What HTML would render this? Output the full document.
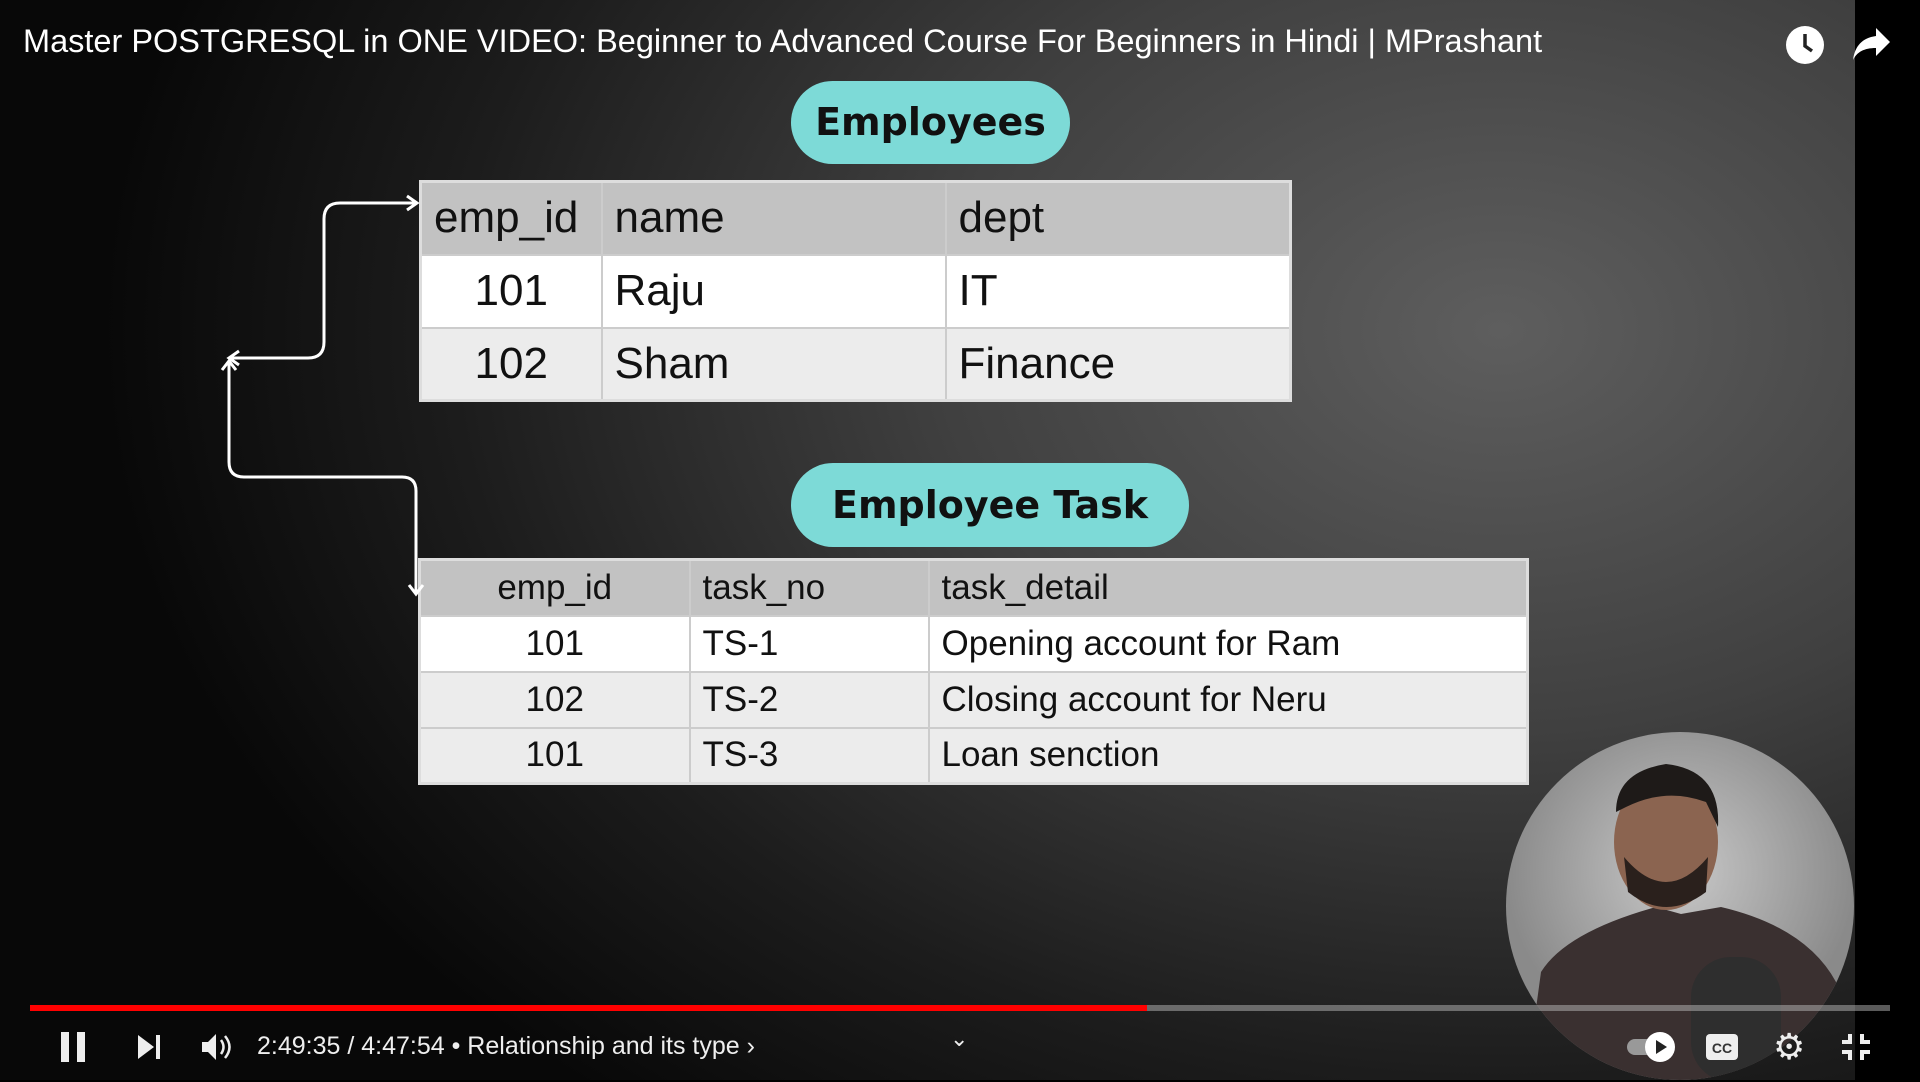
<!DOCTYPE html>
<html><head><meta charset="utf-8"><style>
*{margin:0;padding:0;box-sizing:border-box}
body{width:1920px;height:1080px;overflow:hidden;background:#000;font-family:"Liberation Sans",sans-serif;position:relative}
#vid{position:absolute;left:0;top:0;width:1855px;height:1080px;background:radial-gradient(ellipse 1400px 1000px at 1500px 330px,#5e5e5e 0%,#404040 40%,#1c1c1c 75%,#080808 100%)}
.title{position:absolute;left:23px;top:23px;color:#fff;font-size:32.5px;white-space:nowrap}
.pill{position:absolute;background:#7ddad7;border-radius:42px;color:#111;font-weight:bold;text-align:center;font-family:"DejaVu Sans",sans-serif}
table{position:absolute;border-collapse:collapse;color:#111}
td{border:2px solid #ccc;padding:0 0 0 12px}
.t1 td{font-size:44px;height:73px}
.t2 td{font-size:35px;height:56px}
.hd td{background:#c2c2c2}
.w td{background:#fff}
.g td{background:#ececec}
.c{text-align:center;padding:0}
.bar{position:absolute;top:1005px;height:6px}
.ctl{position:absolute;color:#eee}
</style></head><body>
<div id="vid"></div>
<div class="title">Master POSTGRESQL in ONE VIDEO: Beginner to Advanced Course For Beginners in Hindi | MPrashant</div>
<svg style="position:absolute;left:1785px;top:25px" width="40" height="40" viewBox="0 0 40 40"><circle cx="20" cy="20" r="19" fill="#fff"/><path d="M20 9v12l7 5" stroke="#222" stroke-width="3.5" fill="none"/></svg>
<svg style="position:absolute;left:1852px;top:26px" width="40" height="36" viewBox="0 0 40 36"><path d="M24 2l14 14-14 14v-8C12 22 5 26 1 34 3 20 10 12 24 10z" fill="#fff"/></svg>

<div class="pill" style="left:791px;top:81px;width:279px;height:83px;line-height:83px;font-size:38px">Employees</div>
<table class="t1" style="left:419px;top:180px;width:873px;border:3px solid #ddd">
<tr class="hd"><td style="width:181px">emp_id</td><td style="width:344px">name</td><td>dept</td></tr>
<tr class="w"><td class="c">101</td><td>Raju</td><td>IT</td></tr>
<tr class="g"><td class="c">102</td><td>Sham</td><td>Finance</td></tr>
</table>

<div class="pill" style="left:791px;top:463px;width:398px;height:84px;line-height:84px;font-size:38px">Employee Task</div>
<table class="t2" style="left:418px;top:558px;width:1111px;border:3px solid #ddd">
<tr class="hd"><td class="c" style="width:270px">emp_id</td><td style="width:239px">task_no</td><td>task_detail</td></tr>
<tr class="w"><td class="c">101</td><td>TS-1</td><td>Opening account for Ram</td></tr>
<tr class="g"><td class="c">102</td><td>TS-2</td><td>Closing account for Neru</td></tr>
<tr class="g"><td class="c">101</td><td>TS-3</td><td>Loan senction</td></tr>
</table>

<svg style="position:absolute;left:0;top:0" width="1920" height="1080">
<g stroke="#fff" stroke-width="3" fill="none">
<path d="M417 203H340q-16 0-16 16V342q0 16-16 16H229"/>
<path d="M407 196l10 7-10 7M239 351l-10 7 10 7"/>
<path d="M229 362V462q0 15 15 15H402q14 0 14 14V592"/>
<path d="M222 370l7-9 7 9M409 585l7 9 7-9"/>
</g></svg>

<svg style="position:absolute;left:1506px;top:732px" width="350" height="350">
<defs><clipPath id="cc"><circle cx="174" cy="174" r="174"/></clipPath>
<radialGradient id="bg" cx="0.5" cy="0.4"><stop offset="0" stop-color="#c8c8c8"/><stop offset="1" stop-color="#8a8a8a"/></radialGradient></defs>
<g clip-path="url(#cc)">
<rect width="350" height="350" fill="url(#bg)"/>
<path d="M20 350L35 240Q60 200 150 175L175 182 215 175Q300 195 330 250L340 350Z" fill="#3a3030"/>
<ellipse cx="160" cy="110" rx="52" ry="68" fill="#8b6450"/>
<path d="M110 80Q110 40 160 32Q215 38 212 95L200 70Q160 55 120 75Z" fill="#1e1a18"/>
<path d="M118 125Q160 175 202 125L200 160Q160 190 122 160Z" fill="#2a201c"/>
<rect x="185" y="225" width="90" height="125" rx="40" fill="#2e2e2e"/>
</g></svg>

<div class="bar" style="left:30px;width:1117px;background:#f00"></div>
<div class="bar" style="left:1147px;width:743px;background:rgba(200,200,200,.45)"></div>

<svg class="ctl" style="left:58px;top:1030px" width="30" height="34"><rect x="3" y="2" width="8" height="30" fill="#eee"/><rect x="19" y="2" width="8" height="30" fill="#eee"/></svg>
<svg class="ctl" style="left:136px;top:1033px" width="28" height="28"><path d="M2 2L18 14 2 26Z" fill="#eee"/><rect x="20" y="2" width="4" height="24" fill="#eee"/></svg>
<svg class="ctl" style="left:200px;top:1031px" width="32" height="32"><path d="M2 11h6l8-8v26l-8-8H2Z" fill="#eee"/><path d="M21 9q5 7 0 14M25 5q9 11 0 22" stroke="#eee" stroke-width="2.5" fill="none"/></svg>
<div class="ctl" style="left:257px;top:1032px;font-size:25px;white-space:nowrap">2:49:35 / 4:47:54 • Relationship and its type ›</div>
<div class="ctl" style="left:950px;top:1026px;font-size:22px">⌄</div>
<svg class="ctl" style="left:1625px;top:1030px" width="50" height="34"><rect x="2" y="9" width="40" height="16" rx="8" fill="#999"/><circle cx="35" cy="17" r="15" fill="#fff"/><path d="M31 10l11 7-11 7Z" fill="#222"/></svg>
<svg class="ctl" style="left:1705px;top:1033px" width="34" height="28"><rect x="1" y="1" width="32" height="26" rx="4" fill="#eee"/><text x="17" y="20" font-size="14" font-weight="bold" text-anchor="middle" fill="#333" font-family="Liberation Sans">CC</text></svg>
<div class="ctl" style="left:1773px;top:1026px;font-size:36px">⚙</div>
<svg class="ctl" style="left:1841px;top:1033px" width="30" height="28"><path d="M9 1v8H1M21 1v8h8M9 27v-8H1M21 27v-8h8" stroke="#eee" stroke-width="4" fill="none"/></svg>
</body></html>
